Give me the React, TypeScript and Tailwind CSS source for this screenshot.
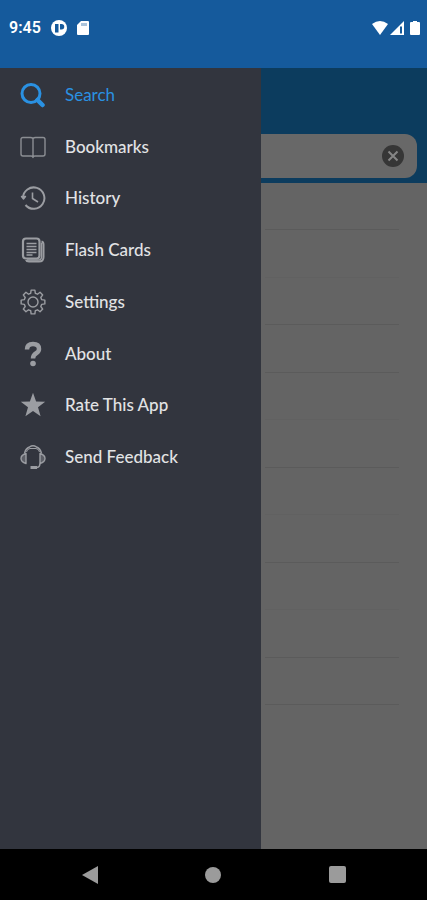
import React from 'react';

interface MenuItem {
  label: string;
  icon: React.ReactNode;
  active?: boolean;
}

interface IconProps {
  children: React.ReactNode;
}

const Icon: React.FC<IconProps> = ({ children }) => (
  <svg
    className="h-[26px] w-[26px] shrink-0"
    viewBox="0 0 26 26"
    fill="none"
    stroke="currentColor"
    strokeWidth="1.4"
    strokeLinejoin="round"
    aria-hidden="true"
  >
    {children}
  </svg>
);

// Outline of the settings cog: eight teeth around a circle
const cogPath = () => {
  const points: string[] = [];
  for (let i = 0; i < 8; i++) {
    const steps: [number, number][] = [[-15, 9], [-9, 12], [9, 12], [15, 9]];
    steps.forEach(([offset, radius]) => {
      const angle = ((i * 45 + offset) * Math.PI) / 180;
      points.push(`${(13 + radius * Math.sin(angle)).toFixed(2)} ${(13 - radius * Math.cos(angle)).toFixed(2)}`);
    });
  }
  return `M${points.join('L')}Z`;
};

const menuItems: MenuItem[] = [
  {
    label: 'Search',
    active: true,
    icon: (
      <Icon>
        <circle cx="11" cy="11.5" r="9" strokeWidth="3" />
        <path d="M17.500 18l5 5" strokeWidth="4.500" strokeLinecap="round" />
      </Icon>
    ),
  },
  {
    label: 'Bookmarks',
    icon: (
      <Icon>
        <path
          d="M13 4.500Q12 3.500 10.500 3.500H3Q1 3.500 1 5.500V20Q1 22 3 22H11Q13 22 13 23.500Q13 22 15 22H23Q25 22 25 20V5.500Q25 3.500 23 3.500H15.500Q14 3.500 13 4.500V23.500"
          opacity="0.85"
        />
      </Icon>
    ),
  },
  {
    label: 'History',
    icon: (
      <Icon>
        <path d="M3 13A10.700 10.700 0 1 1 5.500 20" strokeWidth="2" />
        <path d="M12.500 7.500v6l5.500 3.500" strokeWidth="1.600" />
        <path d="M1.500 11.500h4l-2 2.500z" fill="currentColor" />
      </Icon>
    ),
  },
  {
    label: 'Flash Cards',
    icon: (
      <Icon>
        <rect x="3" y="1.500" width="16.500" height="20" rx="3" strokeWidth="2.200" />
        <path d="M21.500 4.500Q23.500 5 23.500 7.500V20Q23.500 24.500 19 24.500H9Q6.500 24.500 6 23" strokeWidth="2" />
        <path d="M21.500 6V20Q21.500 23 18 23H7" />
        <path d="M6.500 6.500h10M6.500 9.500h10M6.500 12.500h10M6.500 15.500h10M6.500 18h6" strokeWidth="1.600" />
      </Icon>
    ),
  },
  {
    label: 'Settings',
    icon: (
      <Icon>
        <path d={cogPath()} />
        <circle cx="13" cy="13" r="5" />
      </Icon>
    ),
  },
  {
    label: 'About',
    icon: (
      <Icon>
        <path d="M7 8.500Q7 3 13 3Q19 3 19 8Q19 10.500 16.500 12Q13 14 13 17.500" strokeWidth="4.500" />
        <circle cx="13" cy="22.500" r="2.800" fill="currentColor" stroke="none" />
      </Icon>
    ),
  },
  {
    label: 'Rate This App',
    icon: (
      <Icon>
        <path
          d="M13 .8l3.100 8.700 9.100.2-7.200 5.600 2.600 8.900L13 19l-7.600 5.200L8 15.300.8 9.700l9.100-.2z"
          fill="currentColor"
          stroke="none"
        />
      </Icon>
    ),
  },
  {
    label: 'Send Feedback',
    icon: (
      <Icon>
        <path d="M4.500 9.500Q5.500 4.500 9.500 3Q13 .5 16.500 3Q20.500 4.500 21.500 9.500" />
        <path d="M6.500 8Q7 5 10 4.500H16Q19 5 19.500 8" strokeWidth="1" />
        <path d="M6 9.500Q1 11 1 14.500Q1 18 6 19.500zM20 9.500Q25 11 25 14.500Q25 18 20 19.500z" fill="currentColor" fillOpacity="0.4" />
        <path d="M20 19.500Q20 23 17 23.500" />
        <path d="M10.500 23.500h6.500" strokeWidth="3" />
      </Icon>
    ),
  },
];

const resultRows = Array.from({ length: 11 }, (_, index) => index);

const faintRows = [1, 4, 6, 8];

const StatusBar: React.FC = () => (
  <div className="flex h-[68px] shrink-0 items-start justify-between bg-[#155a9c] pt-[18px] pr-[7px] pl-[9px] text-white">
    <div className="flex h-5 items-center gap-2.5">
      <span className="font-[Roboto,sans-serif] text-base font-semibold leading-5">9:45</span>
      <svg className="h-4 w-4" viewBox="0 0 16 16" aria-hidden="true">
        <circle cx="8" cy="8" r="8" fill="currentColor" />
        <path d="M4 4h3.500v8.500H4zM9 4h1.500a2.500 2.500 0 0 1 0 5.500H9z" fill="#155a9c" />
      </svg>
      <svg className="h-4 w-3" viewBox="0 0 12 16" aria-hidden="true">
        <path d="M4 1h7q1 0 1 1v12q0 1-1 1H1q-1 0-1-1V5z" fill="currentColor" />
        <path d="M5 3v3M7 3v3M9 3v3" stroke="#155a9c" opacity="0.7" />
      </svg>
    </div>
    <div className="flex h-5 items-center gap-0.5">
      <svg className="h-4 w-4" viewBox="0 0 16 16" fill="currentColor" aria-hidden="true">
        <path d="M0 4Q8-2 16 4L8 15z" />
      </svg>
      <svg className="h-4 w-[14px]" viewBox="0 0 14 16" aria-hidden="true">
        <path d="M14 1v14H0z" fill="currentColor" />
        <path d="M11 6.500v7" stroke="#155a9c" strokeWidth="2" />
      </svg>
      <svg className="ml-1 h-4 w-[10px]" viewBox="0 0 10 16" fill="currentColor" aria-hidden="true">
        <path d="M3 1h4v1h2q1 0 1 1v11q0 1-1 1H1q-1 0-1-1V3q0-1 1-1h2z" />
      </svg>
    </div>
  </div>
);

const Drawer: React.FC = () => (
  <nav className="w-[261px] shrink-0 bg-[#32353e]" aria-label="Main menu">
    <ul className="grid h-[414px] grid-rows-8">
      {menuItems.map((item) => (
        <li key={item.label} className="flex">
          <a
            href="#"
            aria-current={item.active ? 'page' : undefined}
            className={`flex w-full items-center gap-[19px] pt-0.5 pl-5 ${item.active ? 'text-[#2a91e2]' : 'text-[#9b9da2]'}`}
          >
            {item.icon}
            <span className={`text-[17px] leading-6 ${item.active ? '' : 'font-medium text-[#e2e3e5]'}`}>{item.label}</span>
          </a>
        </li>
      ))}
    </ul>
  </nav>
);

const App: React.FC = () => (
  <div className="flex min-h-screen flex-col bg-black font-[Lato,sans-serif]">
    <StatusBar />
    <div className="flex flex-1">
      <Drawer />

      {/* Dimmed search screen behind the drawer */}
      <main className="min-w-0 flex-1 bg-[#646464]">
        <div className="bg-[#0c3c5e] pt-[66px] pr-2.5 pb-[5px]">
          <div className="flex h-11 items-center rounded-r-xl bg-[#686868] pr-[13px]">
            <input type="text" aria-label="Search" className="h-full min-w-0 flex-1 bg-transparent px-3 text-lg outline-none" />
            <button type="button" aria-label="Clear search">
              <svg className="h-[22px] w-[22px]" viewBox="0 0 22 22" aria-hidden="true">
                <circle cx="11" cy="11" r="11" fill="#363636" />
                <path d="M6.500 6.500l9 9M15.500 6.500l-9 9" stroke="#858585" strokeWidth="2" />
              </svg>
            </button>
          </div>
        </div>
        <ul className="mr-7 ml-1 grid h-[522px] grid-rows-11">
          {resultRows.map((row) => (
            <li key={row} className={`border-b ${faintRows.includes(row) ? 'border-[#616161]' : 'border-[#5b5b5b]'}`} />
          ))}
        </ul>
      </main>
    </div>

    {/* System navigation */}
    <div className="grid h-[51px] shrink-0 grid-cols-3 bg-black px-7 text-[#9b9b9b]">
      <button type="button" aria-label="Back" className="flex items-center justify-center">
        <svg className="h-[18px] w-4" viewBox="0 0 16 18" fill="currentColor">
          <path d="M16 0v18L0 9z" />
        </svg>
      </button>
      <button type="button" aria-label="Home" className="flex items-center justify-center">
        <span className="h-4 w-4 rounded-full bg-[#9b9b9b]" />
      </button>
      <button type="button" aria-label="Recent apps" className="flex items-center justify-center">
        <span className="h-[17px] w-[17px] rounded-xs bg-[#9b9b9b]" />
      </button>
    </div>
  </div>
);

export default App;
